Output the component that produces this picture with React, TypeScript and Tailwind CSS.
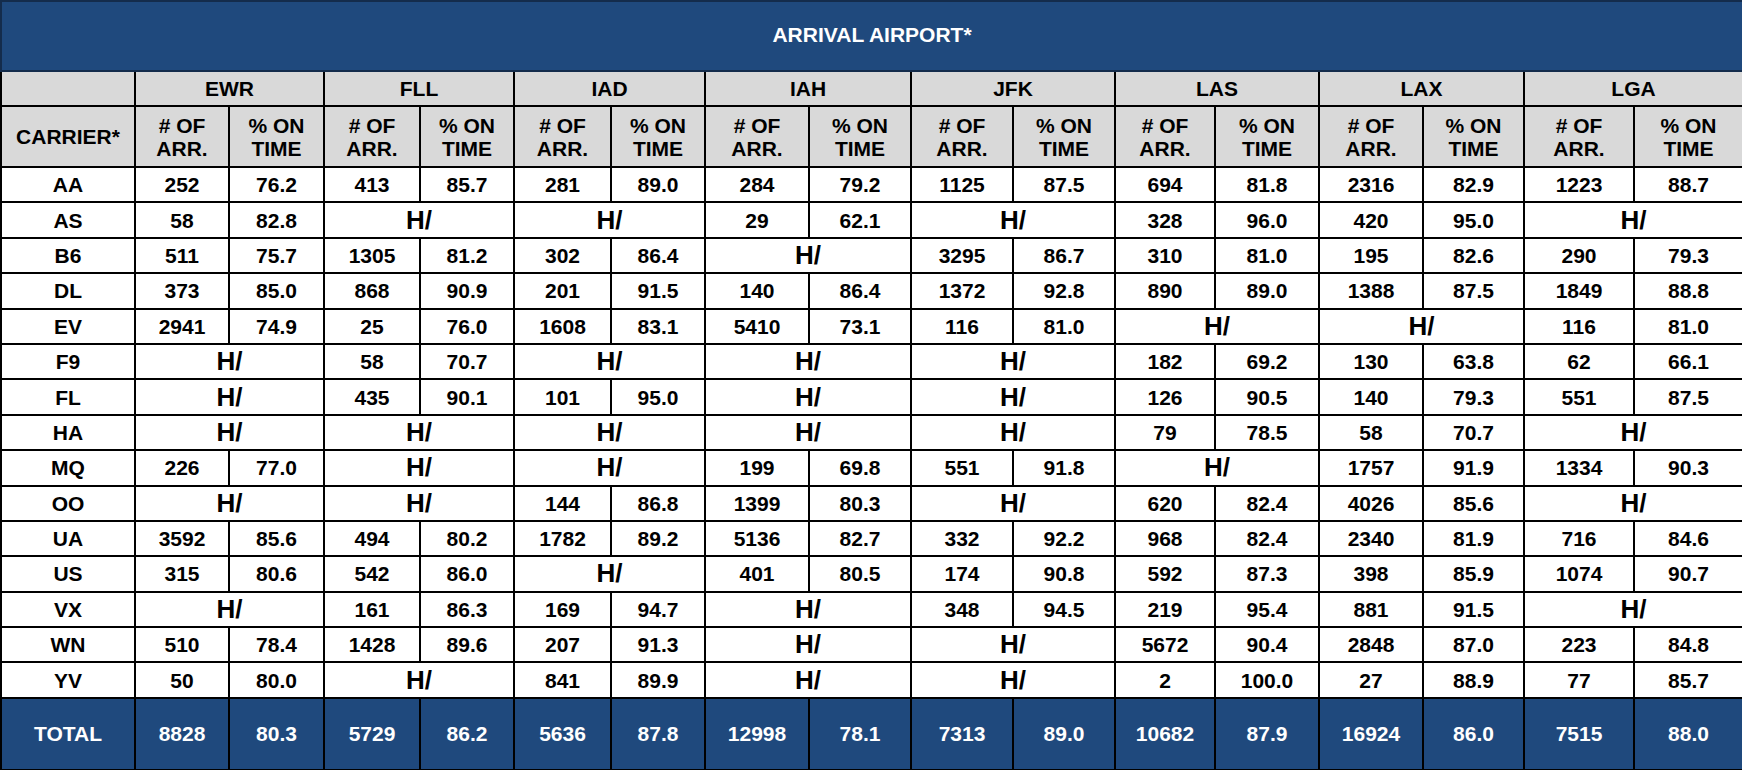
import React from "react";

const airports = ["EWR", "FLL", "IAD", "IAH", "JFK", "LAS", "LAX", "LGA"];
const widths = [134, 94, 95, 96, 94, 97, 94, 104, 102, 102, 102, 100, 104, 104, 101, 110, 109];

type Cell = [string, string] | null;
const rows: [string, Cell[]][] = [
  ["AA", [["252", "76.2"], ["413", "85.7"], ["281", "89.0"], ["284", "79.2"], ["1125", "87.5"], ["694", "81.8"], ["2316", "82.9"], ["1223", "88.7"]]],
  ["AS", [["58", "82.8"], null, null, ["29", "62.1"], null, ["328", "96.0"], ["420", "95.0"], null]],
  ["B6", [["511", "75.7"], ["1305", "81.2"], ["302", "86.4"], null, ["3295", "86.7"], ["310", "81.0"], ["195", "82.6"], ["290", "79.3"]]],
  ["DL", [["373", "85.0"], ["868", "90.9"], ["201", "91.5"], ["140", "86.4"], ["1372", "92.8"], ["890", "89.0"], ["1388", "87.5"], ["1849", "88.8"]]],
  ["EV", [["2941", "74.9"], ["25", "76.0"], ["1608", "83.1"], ["5410", "73.1"], ["116", "81.0"], null, null, ["116", "81.0"]]],
  ["F9", [null, ["58", "70.7"], null, null, null, ["182", "69.2"], ["130", "63.8"], ["62", "66.1"]]],
  ["FL", [null, ["435", "90.1"], ["101", "95.0"], null, null, ["126", "90.5"], ["140", "79.3"], ["551", "87.5"]]],
  ["HA", [null, null, null, null, null, ["79", "78.5"], ["58", "70.7"], null]],
  ["MQ", [["226", "77.0"], null, null, ["199", "69.8"], ["551", "91.8"], null, ["1757", "91.9"], ["1334", "90.3"]]],
  ["OO", [null, null, ["144", "86.8"], ["1399", "80.3"], null, ["620", "82.4"], ["4026", "85.6"], null]],
  ["UA", [["3592", "85.6"], ["494", "80.2"], ["1782", "89.2"], ["5136", "82.7"], ["332", "92.2"], ["968", "82.4"], ["2340", "81.9"], ["716", "84.6"]]],
  ["US", [["315", "80.6"], ["542", "86.0"], null, ["401", "80.5"], ["174", "90.8"], ["592", "87.3"], ["398", "85.9"], ["1074", "90.7"]]],
  ["VX", [null, ["161", "86.3"], ["169", "94.7"], null, ["348", "94.5"], ["219", "95.4"], ["881", "91.5"], null]],
  ["WN", [["510", "78.4"], ["1428", "89.6"], ["207", "91.3"], null, null, ["5672", "90.4"], ["2848", "87.0"], ["223", "84.8"]]],
  ["YV", [["50", "80.0"], null, ["841", "89.9"], null, null, ["2", "100.0"], ["27", "88.9"], ["77", "85.7"]]],
];
const totals: [string, string][] = [
  ["8828", "80.3"], ["5729", "86.2"], ["5636", "87.8"], ["12998", "78.1"], ["7313", "89.0"], ["10682", "87.9"], ["16924", "86.0"], ["7515", "88.0"],
];

export default function App() {
  return (
    <div
      className="w-[1742px] h-[770px] overflow-hidden bg-white"
      style={{ fontFamily: '"Liberation Sans", Arial, sans-serif' }}
    >
      <table className="table-fixed border-collapse w-[1742px] font-bold text-[21px] leading-[23px] text-black text-center">
        <colgroup>
          {widths.map((w, i) => (
            <col key={i} style={{ width: w }} />
          ))}
        </colgroup>
        <tbody>
          <tr className="h-[70px]">
            <td colSpan={17} className="bg-[#1f497d] text-white text-[21px] border-2 border-[#142c4c] align-middle pb-[4px]">
              ARRIVAL AIRPORT*
            </td>
          </tr>
          <tr className="h-[35px]">
            <td className="bg-[#d9d9d9] border-2 border-black"></td>
            {airports.map((a) => (
              <td key={a} colSpan={2} className="bg-[#d9d9d9] border-2 border-black">
                {a}
              </td>
            ))}
          </tr>
          <tr className="h-[61px]">
            <td className="bg-[#d9d9d9] border-2 border-black">CARRIER*</td>
            {airports.map((a) => (
              <React.Fragment key={a}>
                <td className="bg-[#d9d9d9] border-2 border-black">
                  # OF
                  <br />
                  ARR.
                </td>
                <td className="bg-[#d9d9d9] border-2 border-black">
                  % ON
                  <br />
                  TIME
                </td>
              </React.Fragment>
            ))}
          </tr>
          {rows.map(([carrier, cells]) => (
            <tr key={carrier} className="h-[35.4px]">
              <td className="border-2 border-black">{carrier}</td>
              {cells.map((c, i) =>
                c ? (
                  <React.Fragment key={i}>
                    <td className="border-2 border-black">{c[0]}</td>
                    <td className="border-2 border-black">{c[1]}</td>
                  </React.Fragment>
                ) : (
                  <td key={i} colSpan={2} className="border-2 border-black text-[26px]">
                    H/
                  </td>
                )
              )}
            </tr>
          ))}
          <tr className="h-[72px] bg-[#1f497d] text-white">
            <td className="border-2 border-black">TOTAL</td>
            {totals.map((t, i) => (
              <React.Fragment key={i}>
                <td className="border-2 border-black">{t[0]}</td>
                <td className="border-2 border-black">{t[1]}</td>
              </React.Fragment>
            ))}
          </tr>
        </tbody>
      </table>
    </div>
  );
}
